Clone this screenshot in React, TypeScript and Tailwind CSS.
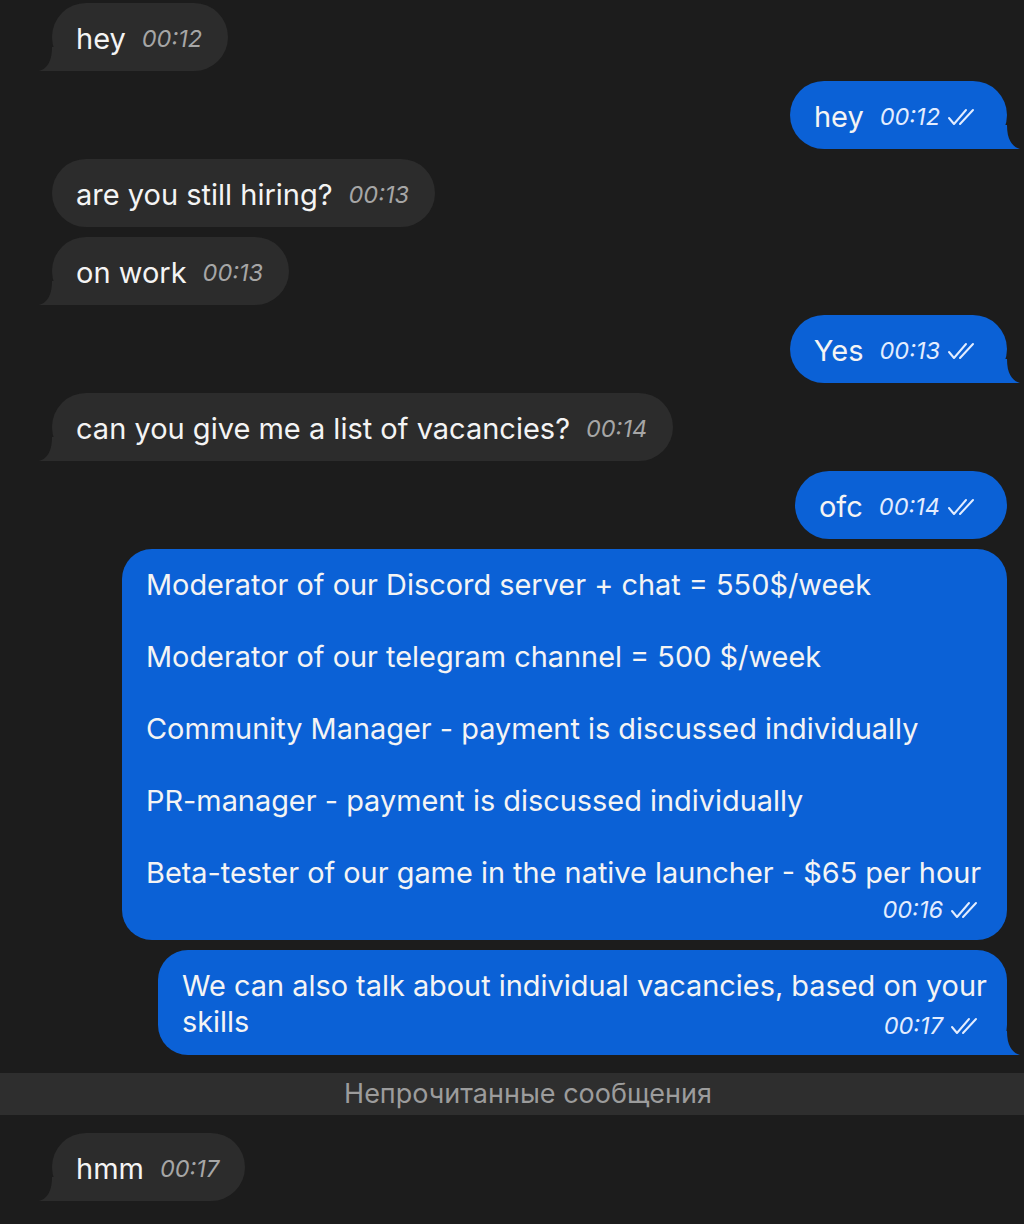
import { FC, ReactNode } from 'react';

const Check: FC = () => (
  <svg width="32" height="20" viewBox="0 0 32 20" fill="none" stroke="currentColor" strokeWidth="2" strokeLinecap="round" strokeLinejoin="round" className="ml-[6px] shrink-0">
    <path d="M3 11l5 6L20 3" />
    <path d="M14 17L27 3" />
  </svg>
);

const Tail: FC<{ out?: boolean }> = ({ out }) =>
  out ? (
    <svg width="48" height="24" viewBox="0 0 48 24" className="absolute right-[-13px] bottom-0 text-[#0b61d6]" fill="currentColor">
      <path d="M35 0L0 0L0 24L48 24C41 22 35 16 35 0Z" />
    </svg>
  ) : (
    <svg width="48" height="24" viewBox="0 0 48 24" className="absolute left-[-13px] bottom-0 text-[#2c2c2c]" fill="currentColor">
      <path d="M13 0L48 0L48 24L0 24C7 22 13 16 13 0Z" />
    </svg>
  );

interface MsgProps {
  text: string;
  time: string;
  out?: boolean;
  tail?: boolean;
}

// one-line bubble, time sits right after the text
const Msg: FC<MsgProps> = ({ text, time, out, tail }) => (
  <div
    className={`relative flex h-[68px] items-center rounded-[34px] pl-6 pt-[3px] ${
      out ? 'self-end bg-[#0b61d6] pr-[29px]' : 'self-start bg-[#2c2c2c] pr-[26px]'
    }`}
  >
    {tail && <Tail out={out} />}
    <span className="relative text-[29px] text-[#f4f4f4]">{text}</span>
    <span className={`relative ml-4 text-[23.5px] italic ${out ? 'text-[#e3edff]' : 'text-[#a6a6a6]'}`}>{time}</span>
    {out && (
      <span className="relative flex text-[#e3edff]">
        <Check />
      </span>
    )}
  </div>
);

const Time: FC<{ children: ReactNode }> = ({ children }) => (
  <span className="flex items-center text-[23.5px] italic text-[#e3edff]">
    {children}
    <Check />
  </span>
);

const vacancies = [
  'Moderator of our Discord server + chat = 550$/week',
  'Moderator of our telegram channel = 500 $/week',
  'Community Manager - payment is discussed individually',
  'PR-manager - payment is discussed individually',
  'Beta-tester of our game in the native launcher - $65 per hour',
];

export default function App() {
  return (
    <div className="min-h-[1224px] bg-[#1c1c1c] font-['Inter',sans-serif] text-[#f4f4f4]">
      <div className="flex flex-col gap-[10px] pl-[52px] pr-[17px] pt-[3px]">
        <Msg text="hey" time="00:12" tail />
        <Msg text="hey" time="00:12" out tail />
        <Msg text="are you still hiring?" time="00:13" />
        <Msg text="on work" time="00:13" tail />
        <Msg text="Yes" time="00:13" out tail />
        <Msg text="can you give me a list of vacancies?" time="00:14" tail />
        <Msg text="ofc" time="00:14" out />

        <div className="ml-[70px] self-stretch rounded-[30px] bg-[#0b61d6] pl-6 pr-[26px] pt-[18px] pb-[15px]">
          <div className="flex flex-col gap-9 whitespace-nowrap text-[28.9px] leading-9">
            {vacancies.map((v) => (
              <div key={v}>{v}</div>
            ))}
          </div>
          <div className="mt-1 flex h-[30px] justify-end">
            <Time>00:16</Time>
          </div>
        </div>

        <div className="relative ml-[106px] self-stretch rounded-[30px] bg-[#0b61d6] pl-6 pr-[26px] pt-[18px] pb-[15px]">
          <Tail out />
          <div className="relative flow-root whitespace-nowrap text-[28.9px] leading-9">
            We can also talk about individual vacancies, based on your
            <br />
            skills
            <span className="relative top-[4px] float-right">
              <Time>00:17</Time>
            </span>
          </div>
        </div>
      </div>

      <div className="mt-[18px] flex h-[42px] items-center justify-center bg-[#2e2e2e] pl-8 text-[27px] text-[#9c9c9c]">
        Непрочитанные сообщения
      </div>

      <div className="flex flex-col pl-[52px] pt-[18px]">
        <Msg text="hmm" time="00:17" tail />
      </div>
    </div>
  );
}
